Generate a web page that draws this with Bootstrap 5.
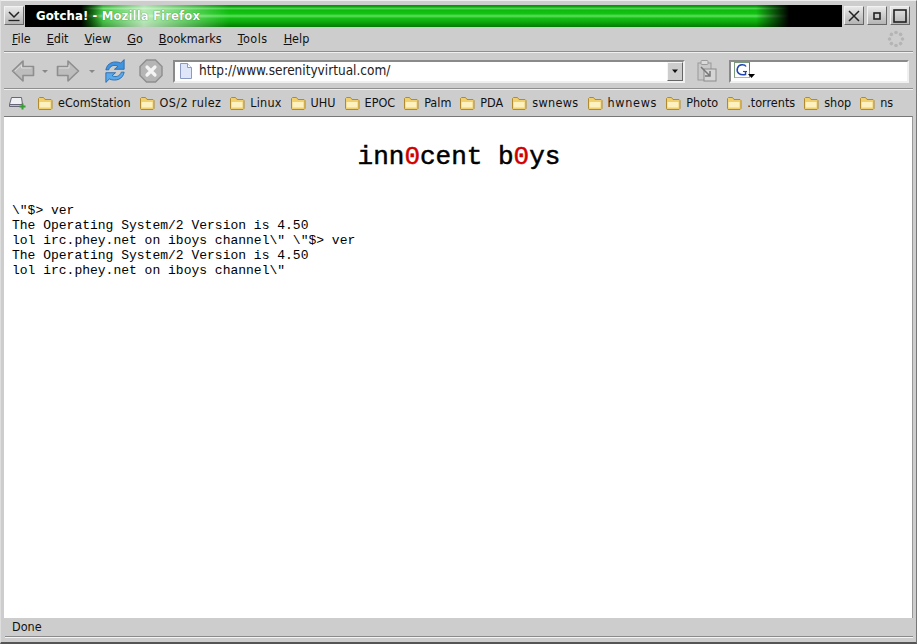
<!DOCTYPE html>
<html lang="en">
<head>
<meta charset="utf-8">
<title>Gotcha! - Mozilla Firefox</title>
<link href="https://cdn.jsdelivr.net/npm/bootstrap@5.3.0/dist/css/bootstrap.min.css" rel="stylesheet">
<style>
html,body{height:644px;overflow:hidden;background:#cdcdcd}
body{font-family:"DejaVu Sans Condensed","DejaVu Sans",sans-serif;font-size:12.5px;color:#111;line-height:1}
.win{height:644px;width:917px;padding:4px 3px 5px 3px;border-bottom:2px solid #555;background:#cdcdcd;border-left:1px solid #dedede;border-right:1px solid #777;border-top:1px solid #eee}
.tbar{height:22px;flex:none;padding:1px 1px 0 0}
.wbtn{width:20px;height:19px;border:1px solid;border-color:#f2f2f2 #666 #666 #f2f2f2;background:linear-gradient(#e8e8e8,#b4b4b4);flex:none}
.grad{flex:1;height:22px;margin:-1px 2px 0 1px;padding-left:11px;color:#fff;font-weight:700;font-size:13px;line-height:21px;letter-spacing:.1px;text-shadow:0 0 1px #0a500a;
background:
linear-gradient(90deg,#000 0,#000 56px,rgba(0,0,0,0) 78px,rgba(0,0,0,0) 731px,#000 764px,#000 100%),
linear-gradient(90deg,rgba(255,255,255,0) 59px,rgba(255,255,255,.7) 119px,rgba(255,255,255,0) 204px),
linear-gradient(#0a8a0a 0,#0fae0f 10%,#5fdc5f 14%,#0dbb0d 24%,#12c412 40%,#5fe05f 50%,#14c014 60%,#0ca80c 78%,#057a05 100%)}
.ctrls{gap:3px;padding-right:2px}
.mbar{height:25px;flex:none;padding:0 0 0 8px;border-bottom:1px solid #8f8f8f;box-shadow:0 1px 0 #f0f0f0}
.mbar span{margin-right:16px}
.tools{height:36px;flex:none;padding:1px 4px 0 7px;border-bottom:1px solid #8f8f8f;box-shadow:0 1px 0 #f0f0f0;margin-top:1px}
.dm1{margin-left:6px}.fw{margin-left:7px}.dm2{margin-left:8px}.rl{margin-left:7px}.st{margin-left:12px}.clipi{margin-left:11px}
.urlbox{height:23px;width:512px;margin-left:10px;background:#fff;border:2px solid;border-color:#8a8a8a #f0f0f0 #f0f0f0 #8a8a8a;padding:0 0 0 4px}
.urlbox .urltxt{flex:1;padding-left:6px;font-size:13.5px;color:#222}
.combo{width:16px;height:19px;background:#cdcdcd;border:1px solid;border-color:#f5f5f5 #666 #666 #f5f5f5}
.searchbox{height:23px;width:180px;margin-left:11px;background:#fff;border:2px solid;border-color:#8a8a8a #f0f0f0 #f0f0f0 #8a8a8a;padding:0 0 0 3px}
.bbar{height:26px;flex:none;padding:0 0 0 4px;margin-top:1px;white-space:nowrap}
.bitem{margin-right:8px}
.bitem svg{margin-right:5px;flex:none}
.addbm{margin-right:10px}
.spa{letter-spacing:.2px}.spb{letter-spacing:.35px}.spc{letter-spacing:.7px}.mspread{letter-spacing:.5px}
.pagev{flex:1;background:#fff;min-height:0;border-top:1px solid #777;border-right:1px solid #999;padding:0 8px;font-family:"Liberation Mono","Courier New",monospace;color:#000}
.headline{font-size:26px;line-height:30px;padding:25px 0 0 2px;text-align:center;-webkit-text-stroke:.5px #000}
.headline i{font-style:normal;color:#d00000;-webkit-text-stroke:.5px #d00000}
.term{margin-top:31px;font-size:13px;line-height:15px}
.sbar{height:19px;flex:none;padding-left:7px;margin-left:1px;border-bottom:1px solid #8a8a8a;box-shadow:0 1px 0 #f4f4f4}
</style>
</head>
<body>
<div class="win d-flex flex-column">
  <div class="tbar d-flex align-items-start">
    <button class="wbtn d-flex align-items-center justify-content-center p-0" aria-label="Window menu">
      <svg width="14" height="12" viewBox="0 0 14 12"><path d="M2 2l5 5 5-5" fill="none" stroke="#222" stroke-width="1.500"/><path d="M1.500 10.500h11" stroke="#222" stroke-width="1.300"/></svg>
    </button>
    <div class="grad">Gotcha! - Mozilla Firefox</div>
    <div class="ctrls d-flex">
      <button class="wbtn d-flex align-items-center justify-content-center p-0" aria-label="Close"><svg width="14" height="14" viewBox="0 0 14 14"><path d="M2 2l10 10M12 2L2 12" stroke="#222" stroke-width="1.500"/></svg></button>
      <button class="wbtn d-flex align-items-center justify-content-center p-0" aria-label="Minimize"><svg width="8" height="8" viewBox="0 0 8 8"><rect x="1" y="1" width="6" height="6" fill="none" stroke="#222" stroke-width="1.600"/></svg></button>
      <button class="wbtn d-flex align-items-center justify-content-center p-0" aria-label="Maximize"><svg width="14" height="14" viewBox="0 0 14 14"><rect x="1" y="1" width="12" height="12" fill="none" stroke="#222" stroke-width="1.600"/></svg></button>
    </div>
  </div>
  <nav class="mbar d-flex align-items-center">
    <span><u>F</u>ile</span><span><u>E</u>dit</span><span><u>V</u>iew</span><span><u>G</u>o</span><span><u>B</u>ookmarks</span><span class="mspread"><u>T</u>ools</span><span><u>H</u>elp</span>
    <svg class="ms-auto me-2" width="18" height="18" viewBox="0 0 18 18"><g fill="#b4b4b4"><circle cx="9" cy="2.500" r="1.800"/><circle cx="13.600" cy="4.400" r="1.800"/><circle cx="15.500" cy="9" r="1.800"/><circle cx="13.600" cy="13.600" r="1.800"/><circle cx="9" cy="15.500" r="1.800"/><circle cx="4.400" cy="13.600" r="1.800"/><circle cx="2.500" cy="9" r="1.800"/><circle cx="4.400" cy="4.400" r="1.800"/></g></svg>
  </nav>
  <div class="tools d-flex align-items-center">
    <svg width="24" height="24" viewBox="0 0 24 24"><path d="M1.500 12L12 2v5.500h10.500v9H12V22z" fill="#bdbdbd" stroke="#8e8e8e" stroke-width="1.600" stroke-linejoin="round"/><path d="M4 12l6.500-6v3h10" fill="none" stroke="#dcdcdc"/></svg>
    <svg class="dm1" width="8" height="5" viewBox="0 0 8 5"><path d="M1 1h6L4 4z" fill="#888"/></svg>
    <svg class="fw" width="24" height="24" viewBox="0 0 24 24"><path d="M22.500 12L12 2v5.500H1.500v9H12V22z" fill="#bdbdbd" stroke="#8e8e8e" stroke-width="1.600" stroke-linejoin="round"/><path d="M3 9h10V6" fill="none" stroke="#dcdcdc"/></svg>
    <svg class="dm2" width="8" height="5" viewBox="0 0 8 5"><path d="M1 1h6L4 4z" fill="#888"/></svg>
    <svg class="rl" width="24" height="24" viewBox="3.500 1.500 17 21"><path d="M4 11C5 5 11 2.500 17 5l3-3v8.500h-8.500l3-2.500c-3-2-7-.5-8 3z" fill="#3f95e0" stroke="#1d5fa8" stroke-width=".7"/><path d="M20 13c-1 6-7 8.500-13 6l-3 3v-8.500h8.500l-3 2.500c3 2 7 .5 8-3z" fill="#5aa9ea" stroke="#1d5fa8" stroke-width=".7"/></svg>
    <svg class="st" width="24" height="24" viewBox="0 0 24 24"><path d="M7.500 1h9L23 7.500v9L16.500 23h-9L1 16.500v-9z" fill="#b5b5b5" stroke="#8e8e8e" stroke-width="1.400"/><path d="M8 8l8 8M16 8l-8 8" stroke="#f4f4f4" stroke-width="3.200" stroke-linecap="round"/></svg>
    <div class="urlbox d-flex align-items-center">
      <svg width="14" height="16" viewBox="0 0 14 16"><path d="M1.500 .5h7l4 4v11h-11z" fill="#dfe6fa" stroke="#8b9ac4"/><path d="M8.500 .5v4h4" fill="#fff" stroke="#8b9ac4"/></svg>
      <span class="urltxt">http://www.serenityvirtual.com/</span>
      <span class="combo d-flex align-items-center justify-content-center"><svg width="8" height="5" viewBox="0 0 8 5"><path d="M1 .5h6L4 4z" fill="#111"/></svg></span>
    </div>
    <svg class="clipi" width="22" height="24" viewBox="0 0 22 24"><rect x="2" y="4" width="13" height="17" fill="#c9c9c9" stroke="#9a9a9a"/><rect x="5" y="1.500" width="7" height="4" rx="1" fill="#dadada" stroke="#9a9a9a"/><rect x="8" y="10" width="12" height="12" fill="#d5d5d5" stroke="#8c8c8c"/><path d="M5 8l9 9m0-5v5H9" fill="none" stroke="#777" stroke-width="1.500"/></svg>
    <div class="searchbox d-flex align-items-center">
      <svg width="22" height="18" viewBox="0 0 22 18"><rect x=".5" y=".5" width="15" height="15" fill="#fff" stroke="#7c9c7c"/><path d="M15.500 .5v8" stroke="#c44"/><path d="M.5 15.500h15" stroke="#d9b33c"/><path d="M12 4.500C11 2.500 5 1.500 3.500 6c-1.500 4.500 2 7.500 8 6.500v-3" fill="none" stroke="#1f46b0" stroke-width="1.500"/><path d="M9 9.500h4" stroke="#1f46b0" stroke-width="1.100"/><path d="M14 12h7l-3.500 4z" fill="#000"/></svg>
    </div>
  </div>
  <div class="bbar d-flex align-items-center">
    <svg class="addbm" width="19" height="14" viewBox="0 0 19 14"><path d="M3.500 1.500h10l1 7h-13z" fill="#eef0f4" stroke="#667"/><path d="M1.500 8.500h13v2h-13z" fill="#b9c0c9" stroke="#667"/><path d="M14.500 7.500v6M11.500 10.500h6" stroke="#3a9a3a" stroke-width="2"/></svg>
    <span class="bitem d-flex align-items-center"><svg width="16" height="14" viewBox="0 0 16 14"><use href="#fold"/></svg>eComStation</span>
    <span class="bitem d-flex align-items-center spb"><svg width="16" height="14" viewBox="0 0 16 14"><use href="#fold"/></svg>OS/2 rulez</span>
    <span class="bitem d-flex align-items-center spa"><svg width="16" height="14" viewBox="0 0 16 14"><use href="#fold"/></svg>Linux</span>
    <span class="bitem d-flex align-items-center"><svg width="16" height="14" viewBox="0 0 16 14"><use href="#fold"/></svg>UHU</span>
    <span class="bitem d-flex align-items-center"><svg width="16" height="14" viewBox="0 0 16 14"><use href="#fold"/></svg>EPOC</span>
    <span class="bitem d-flex align-items-center"><svg width="16" height="14" viewBox="0 0 16 14"><use href="#fold"/></svg>Palm</span>
    <span class="bitem d-flex align-items-center"><svg width="16" height="14" viewBox="0 0 16 14"><use href="#fold"/></svg>PDA</span>
    <span class="bitem d-flex align-items-center spb"><svg width="16" height="14" viewBox="0 0 16 14"><use href="#fold"/></svg>swnews</span>
    <span class="bitem d-flex align-items-center spc"><svg width="16" height="14" viewBox="0 0 16 14"><use href="#fold"/></svg>hwnews</span>
    <span class="bitem d-flex align-items-center"><svg width="16" height="14" viewBox="0 0 16 14"><use href="#fold"/></svg>Photo</span>
    <span class="bitem d-flex align-items-center"><svg width="16" height="14" viewBox="0 0 16 14"><use href="#fold"/></svg>.torrents</span>
    <span class="bitem d-flex align-items-center"><svg width="16" height="14" viewBox="0 0 16 14"><use href="#fold"/></svg>shop</span>
    <span class="bitem d-flex align-items-center"><svg width="16" height="14" viewBox="0 0 16 14"><use href="#fold"/></svg>ns</span>
  </div>
  <main class="pagev">
    <div class="headline">inn<i>0</i>cent b<i>0</i>ys</div>
    <div class="term">\"$&gt; ver<br>The Operating System/2 Version is 4.50<br>lol irc.phey.net on iboys channel\" \"$&gt; ver<br>The Operating System/2 Version is 4.50<br>lol irc.phey.net on iboys channel\"</div>
  </main>
  <div class="sbar d-flex align-items-center">Done</div>
</div>
<svg width="0" height="0" class="position-absolute"><defs><g id="fold"><path d="M1.500 12.500V2.500l1-1h4l1.500 2h6l1 1v8l-1 1h-12z" fill="#f0cf6e" stroke="#b08a2e"/><path d="M2.500 6h11v5.500h-11z" fill="#fdf1bf"/></g></defs></svg>
<script src="https://cdn.jsdelivr.net/npm/bootstrap@5.3.0/dist/js/bootstrap.bundle.min.js"></script>
</body>
</html>
